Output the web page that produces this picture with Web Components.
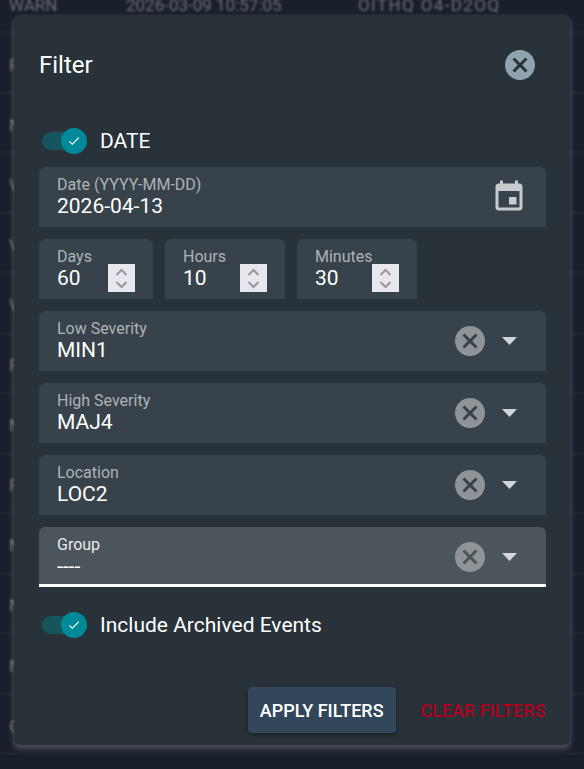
<!DOCTYPE html>
<html>
<head>
<meta charset="utf-8">
<title>Filter</title>
<style>
    html, body { margin: 0; height: 769px; overflow: hidden; background: #1a202b; font-family: Roboto, sans-serif; }
    x-events { margin-top: -27px; }
</style>
</head>
<body>
<x-events>
    <x-event-row><span>WARN</span><span>2026-03-09 10:57:05</span><span style="letter-spacing:1.4px">OITHQ O4-D2OQ</span></x-event-row>
    <x-event-row><span>F</span></x-event-row>
    <x-event-row><span>N</span></x-event-row>
    <x-event-row><span>V</span></x-event-row>
    <x-event-row><span>V</span></x-event-row>
    <x-event-row><span>V</span></x-event-row>
    <x-event-row><span>F</span></x-event-row>
    <x-event-row><span>N</span></x-event-row>
    <x-event-row><span>F</span></x-event-row>
    <x-event-row><span>N</span></x-event-row>
    <x-event-row><span>N</span></x-event-row>
    <x-event-row><span>N</span></x-event-row>
    <x-event-row><span>C</span></x-event-row>
</x-events>

<x-filter-dialog>
    <x-switch>DATE</x-switch>
    <x-field label="Date (YYYY-MM-DD)" value="2026-04-13" style="margin-top:13px">
        <x-calendar-icon></x-calendar-icon>
    </x-field>
    <div style="display:flex;gap:12px;margin-top:12px">
        <x-number-field label="Days" value="60" style="width:114px"></x-number-field>
        <x-number-field label="Hours" value="10" style="width:120px"></x-number-field>
        <x-number-field label="Minutes" value="30" style="width:120px"></x-number-field>
    </div>
    <x-select label="Low Severity" value="MIN1" style="margin-top:12px"></x-select>
    <x-select label="High Severity" value="MAJ4" style="margin-top:12px"></x-select>
    <x-select label="Location" value="LOC2" style="margin-top:12px"></x-select>
    <x-select label="Group" value="----" focused style="margin-top:12px"></x-select>
    <x-switch style="margin-top:25px">Include Archived Events</x-switch>
</x-filter-dialog>

<script>
const CANCEL = 'M12 2C6.47 2 2 6.47 2 12s4.47 10 10 10 10-4.47 10-10S17.53 2 12 2zm5 13.59L15.59 17 12 13.41 8.41 17 7 15.59 10.59 12 7 8.41 8.41 7 12 10.59 15.59 7 17 8.41 13.41 12 17 15.59z';

class Events extends HTMLElement {
    constructor() {
        super();
        this.attachShadow({ mode: 'open' });
        this.shadowRoot.innerHTML = `<style>
        :host { display: block; filter: blur(1.2px); }
        </style><slot></slot>`;
    }
}

class EventRow extends HTMLElement {
    constructor() {
        super();
        this.attachShadow({ mode: 'open' });
        this.shadowRoot.innerHTML = `<style>
        :host {
            display: grid;
            grid-template-columns: 117px 232px 1fr;
            align-items: center;
            box-sizing: border-box;
            height: 60.1px;
            padding: 4px 0 0 9px;
            border-bottom: 1px solid #2e343e;
            color: #6a6f77;
            font-size: 17px;
        }
        </style><slot></slot>`;
    }
}

class FilterDialog extends HTMLElement {
    constructor() {
        super();
        this.attachShadow({ mode: 'open' });
        this.shadowRoot.innerHTML = `<style>
        :host {
            position: absolute;
            left: 14px;
            top: 15px;
            width: 556px;
            height: 730px;
            box-sizing: border-box;
            padding: 0 24px 0 25px;
            display: flex;
            flex-direction: column;
            background: #283238;
            border-radius: 6px;
            color: #fff;
            box-shadow: 0 3px 5px 1px rgba(255,255,255,.2);
        }
        header {
            display: flex;
            justify-content: space-between;
            align-items: center;
            height: 30px;
            margin-top: 35px;
            margin-bottom: 48px;
            padding-right: 11px;
            font-size: 24px;
        }
        svg { display: block; margin: -3px; }
        footer {
            margin-top: auto;
            margin-bottom: 12px;
            margin-right: .5px;
            display: flex;
            align-items: center;
            gap: 24.5px;
            justify-content: flex-end;
            font-size: 18px;
            font-weight: 500;
        }
        .apply {
            height: 46px;
            width: 148px;
            display: flex;
            align-items: center;
            justify-content: center;
            background: #33475b;
            border-radius: 4px;
            box-shadow: 0 2px 4px rgba(0,0,0,.35);
        }
        .clear { color: #b00020; }
        </style>
        <header>
            <span>Filter</span>
            <svg width="36" height="36" viewBox="0 0 24 24"><path fill="#90a4ae" d="${CANCEL}"/></svg>
        </header>
        <slot></slot>
        <footer>
            <span class="apply">APPLY FILTERS</span>
            <span class="clear">CLEAR FILTERS</span>
        </footer>`;
    }
}

class Switch extends HTMLElement {
    constructor() {
        super();
        this.attachShadow({ mode: 'open' });
        this.shadowRoot.innerHTML = `<style>
        :host {
            display: flex;
            align-items: center;
            height: 26px;
            padding-left: 3px;
            font-size: 21px;
            color: #fff;
        }
        .track {
            width: 34px;
            height: 18px;
            border-radius: 9px;
            background: #17555e;
            display: flex;
            align-items: center;
            justify-content: flex-end;
            margin-right: 24px;
        }
        .thumb {
            flex: none;
            width: 26px;
            height: 26px;
            margin-right: -11px;
            border-radius: 50%;
            background: #008a97;
            display: flex;
            align-items: center;
            justify-content: center;
        }
        </style>
        <span class="track"><span class="thumb">
            <svg width="14" height="14" viewBox="0 0 24 24"><path fill="#fff" d="M9 16.17 4.83 12l-1.42 1.41L9 19 21 7l-1.41-1.41z"/></svg>
        </span></span>
        <slot></slot>`;
    }
}

class Field extends HTMLElement {
    static observedAttributes = ['label', 'value'];

    constructor() {
        super();
        this.attachShadow({ mode: 'open' });
    }

    connectedCallback() {
        this._render();
    }

    attributeChangedCallback() {
        this._render();
    }

    _render() {
        this.shadowRoot.innerHTML = `<style>
        :host {
            display: flex;
            align-items: center;
            box-sizing: border-box;
            height: 60px;
            padding: 0 18px;
            background: #37424a;
            border-radius: 6px 6px 0 0;
            color: #fff;
        }
        :host([focused]) {
            background: #4c555c;
            box-shadow: inset 0 -3px 0 #fff;
        }
        .text { flex: 1; min-width: 0; align-self: flex-start; padding-top: 8px; }
        .label { font-size: 16px; line-height: 19px; color: rgba(255,255,255,.6); white-space: nowrap; }
        :host([focused]) .label { color: rgba(255,255,255,.9); }
        .value { font-size: 21px; line-height: 24px; }
        </style>
        <div class="text">
            <div class="label">${this.getAttribute('label') || ''}</div>
            <div class="value">${this.getAttribute('value') || ''}</div>
        </div>
        <slot></slot>`;
    }
}

class NumberField extends HTMLElement {
    constructor() {
        super();
        this.attachShadow({ mode: 'open' });
    }

    connectedCallback() {
        const label = this.getAttribute('label');
        const value = this.getAttribute('value');
        this.shadowRoot.innerHTML = `<style>
        :host { display: block; }
        .spin {
            display: block;
            width: 27px;
            height: 28px;
            margin-top: 18px;
            background: #e9e7ee;
        }
        </style>
        <x-field label="${label}" value="${value}">
            <svg class="spin" viewBox="0 0 27 28" fill="none" stroke="#9a96a5" stroke-width="2">
                <path d="M8.5 11 13.5 6l5 5M8.5 18l5 5 5-5"/>
            </svg>
        </x-field>`;
    }
}

class Select extends HTMLElement {
    constructor() {
        super();
        this.attachShadow({ mode: 'open' });
    }

    connectedCallback() {
        const focused = this.hasAttribute('focused') ? 'focused' : '';
        this.shadowRoot.innerHTML = `<style>
        :host { display: block; }
        .clear { display: block; margin-right: 14px; }
        .arrow { display: block; margin-right: 11px; }
        </style>
        <x-field label="${this.getAttribute('label')}" value="${this.getAttribute('value')}" ${focused}>
            <svg class="clear" width="36" height="36" viewBox="0 0 24 24"><path fill="#8e9498" d="${CANCEL}"/></svg>
            <svg class="arrow" width="15" height="8" viewBox="0 0 15 8"><path fill="#d3d6d8" d="M0 0h15L7.5 8z"/></svg>
        </x-field>`;
    }
}

class CalendarIcon extends HTMLElement {
    constructor() {
        super();
        this.attachShadow({ mode: 'open' });
        this.shadowRoot.innerHTML = `<style>
        :host { display: block; margin-right: 1px; height: 36px; }
        </style>
        <svg width="36" height="36" viewBox="0 0 24 24"><path fill="#c8cccf" d="M17 12h-5v5h5v-5zM16 1v2H8V1H6v2H5c-1.11 0-1.99.9-1.99 2L3 19c0 1.1.89 2 2 2h14c1.1 0 2-.9 2-2V5c0-1.1-.9-2-2-2h-1V1h-2zm3 18H5V8h14v11z"/></svg>`;
    }
}

customElements.define('x-events', Events);
customElements.define('x-event-row', EventRow);
customElements.define('x-filter-dialog', FilterDialog);
customElements.define('x-switch', Switch);
customElements.define('x-field', Field);
customElements.define('x-number-field', NumberField);
customElements.define('x-select', Select);
customElements.define('x-calendar-icon', CalendarIcon);
</script>
</body>
</html>
